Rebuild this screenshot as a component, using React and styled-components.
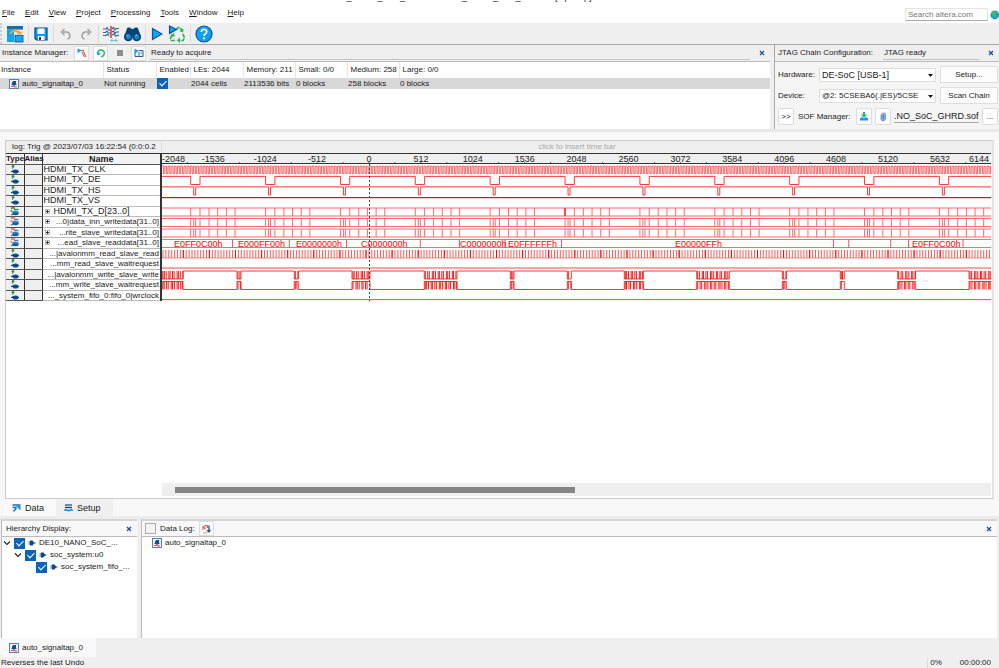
import React from 'react'
import styled, { createGlobalStyle } from 'styled-components'

// ---------- data ----------

const menus = ['File', 'Edit', 'View', 'Project', 'Processing', 'Tools', 'Window', 'Help']

const instanceColumns = [
  { title: 'Instance', width: 103 },
  { title: 'Status', width: 53 },
  { title: 'Enabled', width: 34 },
  { title: 'LEs: 2044', width: 53 },
  { title: 'Memory: 211', width: 52 },
  { title: 'Small: 0/0', width: 52 },
  { title: 'Medium: 258', width: 52 },
  { title: 'Large: 0/0' },
]

const signals = [
  { name: 'HDMI_TX_CLK' },
  { name: 'HDMI_TX_DE' },
  { name: 'HDMI_TX_HS' },
  { name: 'HDMI_TX_VS' },
  { name: 'HDMI_TX_D[23..0]', bus: true },
  { name: '...0|data_inn_writedata[31..0]', bus: true, right: true },
  { name: '...rite_slave_writedata[31..0]', bus: true, right: true },
  { name: '...ead_slave_readdata[31..0]', bus: true, right: true },
  { name: '...|avalonmm_read_slave_read', right: true },
  { name: '...mm_read_slave_waitrequest', right: true },
  { name: '...|avalonmm_write_slave_write', right: true },
  { name: '...mm_write_slave_waitrequest', right: true },
  { name: '..._system_fifo_0:fifo_0|wrclock', right: true },
]

const WAVE_WIDTH = 829
const ZERO = 207
const TICK = 51.9
const ROW = 10.5
const LINE_PERIOD = 74.87

const range = (n) => Array.from({ length: n }, (_, i) => i)
const lineStarts = range(11).map((k) => 28.7 + k * LINE_PERIOD)

const readValues = [
  [12, 'E0FF0C00h'], [76, 'E000FF00h'], [134, 'E0000000h'], [199, 'C0000000h'],
  [298, 'C0000000h'], [346, 'E0FFFFFFh'], [513, 'E00000FFh'], [750, 'E0FF0C00h'],
]
const readEdges = [70.5, 127.3, 184.5, 258.3, 297.5, 343, 399.5, 671.5, 686.7, 728.7, 746.5, 801]

const bursts = [
  [0, 21], [75, 79], [132.3, 136.3], [190, 208], [262.3, 295], [348.3, 352], [405.3, 409.3],
  [462.3, 481.3], [534.7, 567.3], [620.3, 624.3], [678.3, 682.3], [735.7, 753.3], [807, 829],
]

// ---------- icons ----------

const TapIcon = () => (
  <svg width="10" height="10" viewBox="0 0 10 10" aria-hidden="true">
    <rect x="0.5" y="0.5" width="9" height="9" fill="#eef4fb" stroke="#5b7fae" />
    <path d="M4 2h3v3H4zM3 3h1v2H3z" fill="#0f4f95" />
    <path d="M2 7.500h2l1-1.500L6 8h2" stroke="#e0424c" strokeWidth="1.2" fill="none" />
    <path d="M2.5 5.5h5" stroke="#0f4f95" fill="none" />
  </svg>
)

const NodeIcon = () => (
  <svg width="9" height="9" viewBox="0 0 9 9" aria-hidden="true">
    <circle cx="3" cy="1.5" r="1.4" fill="#2f9156" />
    <path d="M2.5 3v3" stroke="#7a8fb0" strokeDasharray="1 1" />
    <ellipse cx="5.5" cy="6.5" rx="3" ry="2.1" fill="#0c4a86" />
    <path d="M1 6.5h8" stroke="#0c4a86" />
  </svg>
)

const BusIcon = ({ green }) => (
  <svg width="9" height="9" viewBox="0 0 9 9" aria-hidden="true">
    <path d="M1 1.5l2-1 2 1M0.5 4h2" stroke={green ? '#2f9156' : '#e0707a'} strokeWidth="1.5" fill="none" />
    <path d="M4 2.5h4.5" stroke={green ? '#2f9156' : '#4a7db0'} strokeWidth="1.3" />
    <ellipse cx="5.5" cy="6" rx="3.2" ry="2.2" fill="#0b5a9c" />
    <path d="M3.5 5h4.5" stroke="#8cc1e6" strokeWidth="0.7" />
    <path d="M1 8l2-1" stroke="#0b5a9c" />
  </svg>
)

const PlugIcon = () => (
  <svg width="8" height="8" viewBox="0 0 8 8" aria-hidden="true">
    <path d="M2 1.5h2.5L6.3 4 4.5 6.5H2z" fill="#0c4a86" />
    <path d="M0.5 3h2M0.5 5h2M5 4h2.5" stroke="#0c4a86" />
  </svg>
)

const HierarchyIcon = () => (
  <svg width="18" height="18" viewBox="0 0 18 18" aria-hidden="true">
    <rect x="1" y="1" width="16" height="16" fill="#d9e9f4" />
    <rect x="1" y="1" width="16" height="3.5" fill="#1c6ea8" />
    <rect x="1" y="4.5" width="7" height="12.5" fill="#0ea5ee" />
    <rect x="9" y="10.5" width="8" height="6.5" fill="#15a9f0" stroke="#0b4f86" strokeWidth="0.8" />
    <path d="M4.5 9c0-4 8-4 9-1" stroke="#f2a33c" strokeWidth="1.8" fill="none" />
    <path d="M10.5 7h6L13.5 10.5z" fill="#f2a33c" />
  </svg>
)

const SaveIcon = () => (
  <svg width="14" height="14" viewBox="0 0 14 14" aria-hidden="true">
    <path d="M1 1h12v12H2.5L1 11.5z" fill="#0c9df0" stroke="#0a447d" strokeWidth="1.2" />
    <rect x="3.5" y="1.5" width="7" height="5.5" fill="#fff" />
    <rect x="4" y="9" width="6.5" height="4" fill="#fff" />
    <rect x="5" y="10" width="2" height="3" fill="#0a447d" />
  </svg>
)

const UndoIcon = ({ flip }) => (
  <svg width="12" height="14" viewBox="0 0 12 14" aria-hidden="true">
    <g transform={flip ? 'translate(12 0) scale(-1 1)' : undefined}>
      <path d="M2 5h4.5a3.6 3.6 0 0 1 1 7" stroke="#a4a4a4" strokeWidth="1.5" fill="none" />
      <path d="M4.5 2L1.5 5 4.5 8" stroke="#a4a4a4" strokeWidth="1.5" fill="none" />
    </g>
  </svg>
)

const WaveIcon = () => (
  <svg width="18" height="16" viewBox="0 0 18 16" aria-hidden="true">
    <path d="M1 3h3l1-1.5L6.5 4H9M10 3l1.5-1.5L13 4l1-1.5h3" stroke="#355f92" strokeWidth="1.1" fill="none" />
    <path d="M1 6.5h2.5L5 5l1.5 2H9M10 6l1.5-1L13 7.5l1.5-1.5H17" stroke="#355f92" strokeWidth="1.1" fill="none" />
    <path d="M1 9.5h3l1.5-1.5L7 10M10 9l2-1 1.5 2 3.5-1" stroke="#355f92" strokeWidth="1.1" fill="none" />
    <path d="M9 0v12" stroke="#e03b44" strokeWidth="1.6" />
    <path d="M8 14.5l2.5-2v4zM12 14.5l2.5-2v4z" fill="#6cc4f2" />
    <path d="M8 14.5h8" stroke="#6cc4f2" />
  </svg>
)

const BinocularsIcon = () => (
  <svg width="17" height="16" viewBox="0 0 17 16" aria-hidden="true">
    <path d="M3 2.5C3 1 7 1 7.5 3h2c.5-2 4.500-2 4.500-.5l2.500 7H.5z" fill="#0b4377" />
    <rect x="6" y="5" width="5" height="5" fill="#0b4377" />
    <circle cx="4.3" cy="10.8" r="3.5" fill="#1582cc" stroke="#0b4377" strokeWidth="1.8" />
    <circle cx="12.7" cy="10.8" r="3.5" fill="#1582cc" stroke="#0b4377" strokeWidth="1.8" />
    <path d="M3 10a2 2 0 0 1 1.5-1M11.5 10a2 2 0 0 1 1.5-1" stroke="#a9dcf8" fill="none" />
  </svg>
)

const PlayIcon = () => (
  <svg width="12" height="14" viewBox="0 0 12 14" aria-hidden="true">
    <path d="M1.5 1.5L11 7 1.5 12.5z" fill="#0ea5f2" stroke="#0b5596" strokeWidth="1.2" />
  </svg>
)

const RecycleIcon = () => (
  <svg width="18" height="18" viewBox="0 0 18 18" aria-hidden="true">
    <path d="M8.5 4.500L10 2.5h2L14 6M15 9l1.500 4-1.500 2.500h-4M7 15.500H3.500L2.500 13l2-3.500" stroke="#27b457" strokeWidth="1.7" strokeDasharray="4 1" fill="none" />
    <path d="M15.500 3.500l-.5 4-3.500-1.500zM12 12.500v5.500l-3-2.800zM2 10.500l4-2.500.5 4z" fill="#27b457" />
    <path d="M1.500 1L8.500 4.500 1.500 8.500z" fill="#0ea5f2" stroke="#0b4a86" strokeWidth="1.1" />
  </svg>
)

const HelpIcon = () => (
  <svg width="18" height="18" viewBox="0 0 18 18" aria-hidden="true">
    <circle cx="9" cy="9" r="8" fill="#0ea1f1" stroke="#0b5596" strokeWidth="1.2" />
    <path d="M6.3 7c0-3.600 5.400-3.400 5.400-.3 0 2-2.700 2.100-2.700 4.300" stroke="#fff" strokeWidth="1.7" fill="none" />
    <circle cx="9" cy="13.3" r="1.1" fill="#fff" />
  </svg>
)

const GlobeIcon = () => (
  <svg width="9" height="10" viewBox="0 0 9 10" aria-hidden="true">
    <circle cx="4.8" cy="5" r="4.4" fill="#189be4" />
    <path d="M2 2l3-1 2 2-2 1 1 2-2 1-2-3zM7 6l1.5-.5L7.500 8 6 8.500z" fill="#4bbf4f" />
  </svg>
)

const RunOnceIcon = () => (
  <svg width="10" height="10" viewBox="0 0 10 10" aria-hidden="true">
    <path d="M0.5 0.5L5 2.5 0.5 5z" fill="#1a9be8" />
    <path d="M4 3l2-1 3 7M5 4l2.5 5" stroke="#d8685e" strokeWidth="1.1" fill="none" />
  </svg>
)

const LoopIcon = () => (
  <svg width="10" height="10" viewBox="0 0 10 10" aria-hidden="true">
    <path d="M2 6.5A3.3 3.3 0 1 1 5 8.5" stroke="#27b070" strokeWidth="1.5" fill="none" />
    <path d="M0.5 4l1.5 3.5L5 5.5z" fill="#1a9be8" />
  </svg>
)

const StopIcon = () => (
  <svg width="8" height="8" viewBox="0 0 8 8" aria-hidden="true">
    <rect x="1" y="1" width="6" height="6" fill="#8e8e8e" />
  </svg>
)

const ReadIcon = () => (
  <svg width="10" height="10" viewBox="0 0 10 10" aria-hidden="true">
    <path d="M1 4v4.500h8V2.500H5" fill="#e4f1fa" stroke="#27608f" />
    <path d="M0.5 0.5L5 3 0.5 5.5z" fill="#1a9be8" />
    <path d="M5 4v4M6.5 5h1.5" stroke="#27608f" strokeWidth="0.8" />
  </svg>
)

const DownloadIcon = () => (
  <svg width="10" height="9" viewBox="0 0 10 9" aria-hidden="true">
    <path d="M4 0h2v2.5h2L5 6 2 2.5h2z" fill="#27b486" />
    <path d="M1 6.5l2-1.5 2 1.5L7 5l2 1.5V8.5H1z" fill="#169be8" />
  </svg>
)

const ClipIcon = () => (
  <svg width="8" height="10" viewBox="0 0 8 10" aria-hidden="true">
    <path d="M2 3.5C2 1 6.5 0 6.5 2.5V6.5C6.5 9.5 2 9.8 2 7z" fill="#8db4d8" stroke="#5a8abc" strokeWidth="0.8" />
    <path d="M4.2 3v4" stroke="#3d6fa5" />
  </svg>
)

const CloseIcon = () => (
  <svg width="6" height="6" viewBox="0 0 6 6" aria-hidden="true">
    <path d="M1 1l4 4M5 1L1 5" stroke="#174f8e" strokeWidth="1.2" />
  </svg>
)

const DataIcon = () => (
  <svg width="9" height="8" viewBox="0 0 9 8" aria-hidden="true">
    <path d="M0.5 1h8M0.5 3.5h4M1.5 7.500l3-3.500" stroke="#1e6ba8" strokeWidth="1.4" />
    <path d="M4 2h4.500v4.500L6 4z" fill="#1a8fd8" />
  </svg>
)

const SetupIcon = () => (
  <svg width="9" height="8" viewBox="0 0 9 8" aria-hidden="true">
    <path d="M1 1h7" stroke="#1e7fc0" strokeWidth="1.6" />
    <path d="M1 3.5h7" stroke="#2b3f58" strokeWidth="1.4" />
    <path d="M0 6.500l2-1 1 1h3l1-1 2 1" stroke="#1e7fc0" strokeWidth="1.3" fill="none" />
  </svg>
)

const LogIcon = () => (
  <svg width="9" height="10" viewBox="0 0 9 10" aria-hidden="true">
    <path d="M1 6V2l2 3V1.5h2.5V4" stroke="#d9534f" fill="none" />
    <path d="M1 9h4V6" stroke="#e79b98" fill="none" />
    <path d="M7 1.5v5" stroke="#174f8e" strokeWidth="1.3" />
    <path d="M4.8 6h4.2L7 9z" fill="#174f8e" />
  </svg>
)

const ChevronIcon = () => (
  <svg width="8" height="8" viewBox="0 0 8 8" aria-hidden="true">
    <path d="M1 2.5L4 5.5 7 2.5" stroke="#222" strokeWidth="1.1" fill="none" />
  </svg>
)

const ArrowIcon = () => (
  <svg width="5" height="3" viewBox="0 0 5 3" aria-hidden="true">
    <path d="M0 0h5L2.5 3z" fill="#111" />
  </svg>
)

const PlusIcon = () => (
  <svg width="5" height="5" viewBox="0 0 5 5" aria-hidden="true">
    <rect x="0.5" y="0.5" width="4" height="4" fill="#fff" stroke="#999" strokeWidth="0.7" />
    <path d="M1 2.5h3M2.5 1v3" stroke="#111" strokeWidth="0.8" />
  </svg>
)

// ---------- waveforms ----------

const rowTop = (row) => 1 + row * ROW

const clockPath = () => {
  let d = 'M0 1.8'
  for (let x = 0; x < WAVE_WIDTH; x += 3.2) {
    d += `H${(x + 1.4).toFixed(1)}V9.6H${(x + 2.8).toFixed(1)}V2.2`
  }
  return d
}

const pulsePath = (row, offset, width) => {
  const hi = rowTop(row) + 0.9
  const lo = rowTop(row) + 9
  return `M0 ${hi}` + lineStarts
    .map((x) => `H${x + offset}V${lo}H${x + offset + width}V${hi}`)
    .join('') + `H${WAVE_WIDTH}`
}

const busPath = (row) => {
  const top = rowTop(row) + 1
  const low = rowTop(row) + 9
  return `M0 ${top}H${WAVE_WIDTH}M0 ${low}H${WAVE_WIDTH}`
}

const edgesPath = (row, edges) =>
  edges.map((x) => `M${x} ${rowTop(row) + 1}V${rowTop(row) + 9}`).join('')

const lineEdges = (offsets) => lineStarts.flatMap((x) => offsets.map((o) => x + o))

// idle level between the bursts and fast toggling inside them
const burstPath = (row, idleHigh) => {
  const hi = rowTop(row) + 1
  const lo = rowTop(row) + 9
  const idle = idleHigh ? hi : lo
  let d = `M0 ${idle}`
  bursts.forEach(([from, to]) => {
    d += `H${from}V${idleHigh ? lo : hi}H${to}V${idle}`
  })
  return d + `H${WAVE_WIDTH}`
}

const burstTicks = (row, seed) => {
  const steps = [1.3, 1.9, 2.7, 1.2, 2.4, 1.6, 3]
  let d = ''
  bursts.forEach(([from, to], b) => {
    let x = from + 1
    let i = b + seed
    while (x < to) {
      d += `M${x.toFixed(1)} ${rowTop(row) + 1}V${rowTop(row) + 9}`
      x += steps[i % steps.length]
      i += 1
    }
  })
  return d
}

const readTicks = range(286).map((i) => 1 + i * 2.9)

const Waveforms = () => (
  <svg width={WAVE_WIDTH} height="137" viewBox={`0 0 ${WAVE_WIDTH} 137`} fill="none" role="img" aria-label="Signal waveforms">
    <path d={clockPath()} stroke="#ff3b3b" strokeWidth="0.8" />
    <path d={pulsePath(1, 0, 9.3)} stroke="#f22" strokeWidth="0.9" />
    <path d={pulsePath(2, 3, 2)} stroke="#f22" strokeWidth="0.9" />
    <rect x="0" y="33" width={WAVE_WIDTH} height="1.2" fill="#ff0000" />
    {[4, 5, 6, 7].map((row) => (
      <path key={row} d={busPath(row)} stroke="#ff5a5a" strokeWidth="0.9" />
    ))}
    <path d={edgesPath(4, lineEdges([0, 9.3, 18.3, 27, 35.7, 44.3]))} stroke="#ff5a5a" strokeWidth="0.9" />
    <path d={edgesPath(4, [403])} stroke="#ff2020" strokeWidth="1.4" />
    <path d={edgesPath(5, lineEdges([0, 3, 5, 9.3, 18.3, 27, 35.7, 44.3]))} stroke="#ff5a5a" strokeWidth="0.9" />
    <path d={edgesPath(6, lineEdges([0, 3, 5, 9.3, 18.3, 27, 35.7, 44.3]))} stroke="#ff5a5a" strokeWidth="0.9" />
    <path d={edgesPath(7, readEdges)} stroke="#ff4040" strokeWidth="0.9" />
    {readValues.map(([x, value]) => (
      <ValueText key={x} x={x} y={rowTop(7) + 8}>{value}</ValueText>
    ))}
    <path d={edgesPath(8, readTicks)} stroke="#ff4545" strokeWidth="0.9" />
    <path d={edgesPath(8, readTicks.filter((_, i) => i % 9 === 7))} stroke="#ff0000" />
    <path d={`M0 ${rowTop(8) + 9}H${WAVE_WIDTH}`} stroke="#ff5a5a" strokeWidth="0.7" />
    <rect x="0" y="103.3" width={WAVE_WIDTH} height="1.4" fill="#ff7d7d" />
    <path d={burstPath(10, true)} stroke="#f22" strokeWidth="0.9" />
    <path d={burstTicks(10, 0)} stroke="#ff0000" strokeWidth="0.9" />
    <path d={burstPath(11, false)} stroke="#f22" strokeWidth="0.9" />
    <path d={burstTicks(11, 3)} stroke="#ff0000" strokeWidth="0.9" />
    <rect x="0" y="135" width={WAVE_WIDTH} height="1.1" fill="#ff5a5a" />
    <path d={`M${ZERO + 0.5} 0V137`} stroke="#333" strokeWidth="0.9" strokeDasharray="2 2" />
  </svg>
)

const Ruler = () => (
  <RulerSvg width={WAVE_WIDTH} height="10" viewBox={`0 0 ${WAVE_WIDTH} 10`}>
    {range(17).map((i) => {
      const k = i - 4
      const anchor = i === 0 ? 'start' : i === 16 ? 'end' : 'middle'
      const x = i === 0 ? 0 : i === 16 ? WAVE_WIDTH - 2 : ZERO + k * TICK
      return (
        <g key={k}>
          <RulerText x={x} y="8" textAnchor={anchor}>{k * 512}</RulerText>
          <path d={`M${ZERO + k * TICK} 8V10M${ZERO + (k + 0.5) * TICK} 8V10`} stroke="#444" strokeWidth="0.8" />
        </g>
      )
    })}
    <rect x="0" y="9" width={WAVE_WIDTH} height="1" fill="#333" />
  </RulerSvg>
)

// ---------- page ----------

const App = () => (
  <Window>
    <GlobalStyle />
    <TitleBar>DE10_NANO_SoC_GHRD - DE10_NANO_SoC_GHRD - [stp1.stp]</TitleBar>
    <MenuBar>
      {menus.map((menu) => (
        <MenuButton key={menu} type="button"><u>{menu[0]}</u>{menu.slice(1)}</MenuButton>
      ))}
      <Search>
        <input type="search" aria-label="Search altera.com" placeholder="Search altera.com" />
        <GlobeIcon />
      </Search>
    </MenuBar>
    <ToolBar>
      <ToolButton type="button" aria-label="Hierarchy" $width={18}><HierarchyIcon /></ToolButton>
      <Divider />
      <ToolButton type="button" aria-label="Save" $width={16}><SaveIcon /></ToolButton>
      <Divider />
      <ToolButton type="button" aria-label="Undo" $width={16}><UndoIcon /></ToolButton>
      <ToolButton type="button" aria-label="Redo" $width={16}><UndoIcon flip /></ToolButton>
      <Divider />
      <ToolButton type="button" aria-label="Insert time bar" $width={16}><WaveIcon /></ToolButton>
      <ToolButton type="button" aria-label="Find" $width={18}><BinocularsIcon /></ToolButton>
      <Divider />
      <ToolButton type="button" aria-label="Run analysis" $width={14}><PlayIcon /></ToolButton>
      <ToolButton type="button" aria-label="Autorun analysis" $width={18}><RecycleIcon /></ToolButton>
      <Divider />
      <ToolButton type="button" aria-label="Help" $width={18}><HelpIcon /></ToolButton>
    </ToolBar>

    <TopPanels>
      <InstancePanel>
        <PanelHeader $tone="#efefef">
          <HeaderLabel>Instance Manager:</HeaderLabel>
          <IconButton type="button" aria-label="Run"><RunOnceIcon /></IconButton>
          <IconButton type="button" aria-label="Autorun"><LoopIcon /></IconButton>
          <IconButton type="button" aria-label="Stop" $flat><StopIcon /></IconButton>
          <IconButton type="button" aria-label="Read data"><ReadIcon /></IconButton>
          <StatusField>Ready to acquire</StatusField>
          <CloseButton type="button" aria-label="Close instance manager"><CloseIcon /></CloseButton>
        </PanelHeader>
        <InstanceTable>
          <colgroup>
            {instanceColumns.map((col) => <col key={col.title} width={col.width} />)}
          </colgroup>
          <thead>
            <tr>{instanceColumns.map((col) => <th key={col.title}>{col.title}</th>)}</tr>
          </thead>
          <tbody>
            <tr>
              <td><NameCell><TapIcon />auto_signaltap_0</NameCell></td>
              <td>Not running</td>
              <td><Checkbox type="checkbox" aria-label="Enable auto_signaltap_0" defaultChecked /></td>
              <td>2044 cells</td>
              <td>2113536 bits</td>
              <td>0 blocks</td>
              <td>258 blocks</td>
              <td>0 blocks</td>
            </tr>
          </tbody>
        </InstanceTable>
      </InstancePanel>

      <JtagPanel>
        <PanelHeader $tone="#efefef">
          <JtagTitle>JTAG Chain Configuration:</JtagTitle>
          <StatusField>JTAG ready</StatusField>
          <CloseButton type="button" aria-label="Close JTAG chain configuration"><CloseIcon /></CloseButton>
        </PanelHeader>
        <JtagBody>
          <FieldRow>
            <label htmlFor="hardware">Hardware:</label>
            <SelectBox>
              <select id="hardware"><option>DE-SoC [USB-1]</option></select>
              <ArrowIcon />
            </SelectBox>
            <PushButton type="button">Setup...</PushButton>
          </FieldRow>
          <FieldRow>
            <label htmlFor="device">Device:</label>
            <SelectBox $compact>
              <select id="device"><option>@2: 5CSEBA6(.|ES)/5CSE</option></select>
              <ArrowIcon />
            </SelectBox>
            <PushButton type="button">Scan Chain</PushButton>
          </FieldRow>
          <SofRow>
            <PushButton type="button" aria-label="Attach">&gt;&gt;</PushButton>
            <label htmlFor="sof">SOF Manager:</label>
            <PushButton type="button" aria-label="Program device"><DownloadIcon /></PushButton>
            <PushButton type="button" aria-label="Attach SOF file"><ClipIcon /></PushButton>
            <input id="sof" defaultValue=".NO_SoC_GHRD.sof" />
            <PushButton type="button" aria-label="Browse">...</PushButton>
          </SofRow>
        </JtagBody>
      </JtagPanel>
    </TopPanels>

    <WaveSection>
      <WaveFrame>
        <WaveTop>
          <LogTitle>log: Trig @ 2023/07/03 16:22:54 (0:0:0.2</LogTitle>
          <TimeBarHint>click to insert time bar</TimeBarHint>
        </WaveTop>
        <WaveBody>
          <SignalTable>
            <thead>
              <tr><th>Type</th><th>Alias</th><th>Name</th></tr>
            </thead>
            <tbody>
              {signals.map((signal, i) => (
                <tr key={signal.name}>
                  <td>{signal.bus ? <BusIcon green={i === 4} /> : <NodeIcon />}</td>
                  <td />
                  <td>
                    <SignalName $right={signal.right}>
                      {signal.bus && <PlusIcon />}
                      <span>{signal.name}</span>
                    </SignalName>
                  </td>
                </tr>
              ))}
            </tbody>
          </SignalTable>
          <WavePane>
            <Ruler />
            <Waveforms />
          </WavePane>
        </WaveBody>
        <ScrollTrack><ScrollThumb /></ScrollTrack>
      </WaveFrame>
      <Tabs>
        <Tab type="button" $active><DataIcon />Data</Tab>
        <Tab type="button"><SetupIcon />Setup</Tab>
      </Tabs>
    </WaveSection>

    <BottomPanels>
      <HierarchyPanel>
        <PanelHeader $tone="#f8f8f8" $short>
          <HierarchyTitle>Hierarchy Display:</HierarchyTitle>
          <CloseButton type="button" aria-label="Close hierarchy display"><CloseIcon /></CloseButton>
        </PanelHeader>
        <Tree>
          <TreeItem $depth={0}>
            <ChevronIcon />
            <label><Checkbox type="checkbox" defaultChecked /><PlugIcon />DE10_NANO_SoC_...</label>
          </TreeItem>
          <TreeItem $depth={1}>
            <ChevronIcon />
            <label><Checkbox type="checkbox" defaultChecked /><PlugIcon />soc_system:u0</label>
          </TreeItem>
          <TreeItem $depth={3}>
            <label><Checkbox type="checkbox" defaultChecked /><PlugIcon />soc_system_fifo_...</label>
          </TreeItem>
        </Tree>
      </HierarchyPanel>
      <LogPanel>
        <PanelHeader $tone="#f8f8f8" $short>
          <LogLabel><Checkbox type="checkbox" />Data Log:</LogLabel>
          <IconButton type="button" aria-label="Log settings"><LogIcon /></IconButton>
          <Spacer />
          <CloseButton type="button" aria-label="Close data log"><CloseIcon /></CloseButton>
        </PanelHeader>
        <LogEntry><TapIcon />auto_signaltap_0</LogEntry>
      </LogPanel>
    </BottomPanels>

    <FileTabs>
      <FileTab type="button"><TapIcon />auto_signaltap_0</FileTab>
    </FileTabs>
    <StatusBar>
      <span>Reverses the last Undo</span>
      <Progress><span>0%</span><span>00:00:00</span></Progress>
    </StatusBar>
  </Window>
)

// ---------- styles ----------

const GlobalStyle = createGlobalStyle`
  * {
    box-sizing: border-box;
  }
  body {
    margin: 0;
    background: #efefef;
    color: #1a1a1a;
    font-family: 'Liberation Sans', Arial, sans-serif;
    font-size: 8px;
    line-height: 10px;
  }
  button, input, select {
    font: inherit;
    color: inherit;
    margin: 0;
    padding: 0;
    border: 0;
    outline: none;
    background: transparent;
  }
  svg {
    display: block;
    flex: none;
  }
`

const Window = styled.div`
  display: flex;
  flex-direction: column;
  min-height: 100vh;
`

const TitleBar = styled.div`
  display: flex;
  align-items: flex-end;
  height: 2px;
  padding-left: 324px;
  overflow: hidden;
  background: #fff;
  font-size: 9px;
  white-space: nowrap;
`

const MenuBar = styled.nav`
  display: flex;
  align-items: center;
  gap: 10px;
  height: 21px;
  padding-left: 2px;
  background: #fff;
`

const MenuButton = styled.button`
  white-space: nowrap;
`

const Search = styled.div`
  display: flex;
  align-items: center;
  gap: 2px;
  margin-left: auto;
  padding-top: 4px;
  input {
    width: 83px;
    height: 13px;
    padding-left: 2px;
    border: 1px solid #e4e4e4;
    border-bottom-color: #aaa;
    background: #fff;
    appearance: none;
  }
  input::placeholder {
    color: #777;
  }
`

const ToolBar = styled.div`
  display: flex;
  align-items: center;
  gap: 4px;
  height: 21px;
  padding-left: 4px;
  background: #efefef;
  border-left: 2px dotted #ccc;
`

const ToolButton = styled.button`
  display: flex;
  justify-content: center;
  width: ${({ $width }) => $width}px;
`

const Divider = styled.span`
  width: 1px;
  height: 18px;
  background: #dadada;
`

const TopPanels = styled.div`
  display: flex;
  gap: 4px;
  height: 88px;
  border-top: 1px solid #aaa;
  border-bottom: 3px solid #e8e8e8;
`

const InstancePanel = styled.section`
  display: flex;
  flex-direction: column;
  flex: 1;
  min-width: 0;
  background: #fff;
`

const JtagPanel = styled.section`
  width: 225px;
  border-left: 1px solid #aaa;
  background: #f5f5f5;
`

const PanelHeader = styled.header`
  display: flex;
  align-items: center;
  gap: 4px;
  height: ${({ $short }) => ($short ? 16 : 17)}px;
  border-bottom: 1px solid #bbb;
  background: ${({ $tone }) => $tone};
  white-space: nowrap;
`

const HeaderLabel = styled.span`
  width: 70px;
  padding-left: 2px;
`

const JtagTitle = styled.span`
  width: 104px;
  padding-left: 3px;
`

const IconButton = styled.button`
  display: flex;
  align-items: center;
  justify-content: center;
  width: 15px;
  height: 15px;
  border: 1px solid ${({ $flat }) => ($flat ? '#eee' : '#ddd')};
  background: ${({ $flat }) => ($flat ? '#f2f2f2' : '#fcfcfc')};
`

const StatusField = styled.span`
  flex: 1;
  padding: 1px;
  border-bottom: 1px solid #c4c4c4;
`

const CloseButton = styled.button`
  display: flex;
  align-items: center;
  justify-content: center;
  width: 16px;
  height: 12px;
`

const InstanceTable = styled.table`
  width: 100%;
  table-layout: fixed;
  border-collapse: collapse;
  th, td {
    padding: 0;
    text-align: left;
    font-weight: normal;
    white-space: nowrap;
  }
  th {
    height: 16px;
    padding-left: 3px;
    border-right: 1px solid #e6e6e6;
  }
  th:first-child {
    padding-left: 1px;
  }
  th:last-child {
    border-right: 0;
  }
  td {
    height: 11px;
    padding-left: 1px;
    background: #d8d8d8;
  }
`

const NameCell = styled.div`
  display: flex;
  align-items: center;
  gap: 3px;
  padding-left: 8px;
`

const Checkbox = styled.input`
  display: block;
  position: relative;
  width: 11px;
  height: 11px;
  flex: none;
  appearance: none;
  border: 1px solid #aaa;
  background: #f4f4f4;
  &:checked {
    border-color: #0b62b8;
    background: #0b62b8;
  }
  &:checked::after {
    content: '';
    position: absolute;
    left: 3px;
    top: 0;
    width: 3px;
    height: 6px;
    border: solid #fff;
    border-width: 0 1px 1px 0;
    transform: rotate(45deg);
  }
`

const JtagBody = styled.div`
  display: flex;
  flex-direction: column;
  gap: 4px;
  padding: 4px 1px 0 3px;
`

const FieldRow = styled.div`
  display: grid;
  grid-template-columns: 37px 1fr 58px;
  align-items: center;
  gap: 4px;
  height: 17px;
`

const SelectBox = styled.div`
  position: relative;
  height: 14px;
  select {
    width: 100%;
    height: 14px;
    padding: 0 8px 0 2px;
    border: 1px solid #ddd;
    background: #fff;
    font-size: ${({ $compact }) => ($compact ? 8 : 9)}px;
    appearance: none;
  }
  svg {
    position: absolute;
    top: 6px;
    right: 3px;
  }
`

const PushButton = styled.button`
  display: flex;
  align-items: center;
  justify-content: center;
  height: 17px;
  min-width: 16px;
  border: 1px solid #ddd;
  border-radius: 1px;
  background: #fdfdfd;
  white-space: nowrap;
`

const SofRow = styled.div`
  display: flex;
  align-items: center;
  gap: 3px;
  white-space: nowrap;
  label {
    width: 56px;
    padding-left: 1px;
  }
  input {
    flex: 1;
    width: 0;
    height: 13px;
    border-bottom: 1px solid #aaa;
    font-size: 9px;
  }
`

const WaveSection = styled.section`
  display: flex;
  flex: 1;
  flex-direction: column;
  padding-top: 8px;
  border-bottom: 3px solid #ececec;
  background: #f8f8f8;
`

const WaveFrame = styled.div`
  display: flex;
  flex: 1;
  flex-direction: column;
  margin: 0 5px;
  padding-bottom: 2px;
  border: 1px solid #ccc;
  border-right: 2px solid #e4e4e4;
  background: #fff;
`

const WaveTop = styled.div`
  display: flex;
  align-items: center;
  height: 12px;
  background: #efefef;
`

const LogTitle = styled.div`
  width: 155px;
  padding-left: 6px;
  white-space: nowrap;
`

const TimeBarHint = styled.div`
  flex: 1;
  border-left: 1px solid #ddd;
  color: #a8a8a8;
  text-align: center;
`

const WaveBody = styled.div`
  display: flex;
  overflow: hidden;
  border-top: 1px solid #333;
  margin-right: 1px;
`

const SignalTable = styled.table`
  width: 156px;
  height: 147px;
  flex: none;
  table-layout: fixed;
  border-collapse: collapse;
  border-right: 2px solid #333;
  font-size: 9px;
  line-height: 9px;
  th, td {
    padding: 0;
    border-right: 1px solid #333;
    border-bottom: 1px solid #555;
    white-space: nowrap;
  }
  th {
    height: 10px;
    line-height: 8px;
    background: #f2f2f2;
  }
  th:nth-child(-n + 2) {
    width: 18px;
    font-size: 8px;
  }
  td {
    background: #efefef;
  }
  td:last-child {
    border-bottom-color: #bbb;
    background: #fff;
  }
  td > svg {
    margin: 0 auto;
  }
`

const SignalName = styled.div`
  display: flex;
  align-items: center;
  padding: 0 1px;
  font-size: ${({ $right }) => ($right ? 8 : 9)}px;
  svg {
    margin: 0 4px 0 1px;
  }
  span {
    margin-left: ${({ $right }) => ($right ? 'auto' : '0')};
  }
`

const WavePane = styled.div`
  flex: 1;
  overflow: hidden;
`

const RulerSvg = styled.svg`
  background: #efefef;
`

const RulerText = styled.text`
  font-size: 9px;
  fill: #222;
`

const ValueText = styled.text`
  font-size: 9px;
  fill: #f00;
`

const ScrollTrack = styled.div`
  height: 13px;
  margin: auto 1px 0 156px;
  padding: 4px 0 0 13px;
  background: #efefef;
`

const ScrollThumb = styled.div`
  width: 49%;
  height: 6px;
  background: #858585;
`

const Tabs = styled.div`
  display: flex;
  height: 17px;
  padding-left: 4px;
`

const Tab = styled.button`
  display: flex;
  align-items: center;
  gap: 4px;
  padding: 0 12px 0 8px;
  background: ${({ $active }) => ($active ? '#fafafa' : '#f0f0f0')};
  font-size: 9px;
`

const BottomPanels = styled.div`
  display: flex;
  gap: 4px;
  height: 119px;
  padding: 0 2px 0 1px;
`

const HierarchyPanel = styled.section`
  width: 136px;
  border-top: 2px solid #d4d4d4;
  border-left: 1px solid #bbb;
  background: #fff;
`

const LogPanel = styled.section`
  flex: 1;
  border-top: 2px solid #d4d4d4;
  border-left: 1px solid #bbb;
  background: #fff;
`

const HierarchyTitle = styled.span`
  flex: 1;
  padding-left: 4px;
`

const Tree = styled.ul`
  margin: 0;
  padding: 0;
  list-style: none;
`

const TreeItem = styled.li`
  display: flex;
  align-items: center;
  gap: 3px;
  height: 12px;
  padding-left: ${({ $depth }) => 1 + $depth * 11}px;
  white-space: nowrap;
  label {
    display: flex;
    align-items: center;
    gap: 3px;
  }
`

const LogLabel = styled.label`
  display: flex;
  align-items: center;
  gap: 4px;
  padding-left: 3px;
`

const Spacer = styled.span`
  flex: 1;
`

const LogEntry = styled.div`
  display: flex;
  align-items: center;
  gap: 3px;
  height: 12px;
  padding-left: 10px;
`

const FileTabs = styled.div`
  display: flex;
  height: 19px;
`

const FileTab = styled.button`
  display: flex;
  align-items: center;
  gap: 3px;
  width: 96px;
  padding-left: 9px;
  background: #f9f9f9;
`

const StatusBar = styled.footer`
  display: flex;
  align-items: center;
  justify-content: space-between;
  height: 11px;
  padding: 0 8px 0 1px;
`

const Progress = styled.div`
  display: flex;
  gap: 18px;
  padding-left: 2px;
  border-left: 1px solid #ddd;
`

export default App
